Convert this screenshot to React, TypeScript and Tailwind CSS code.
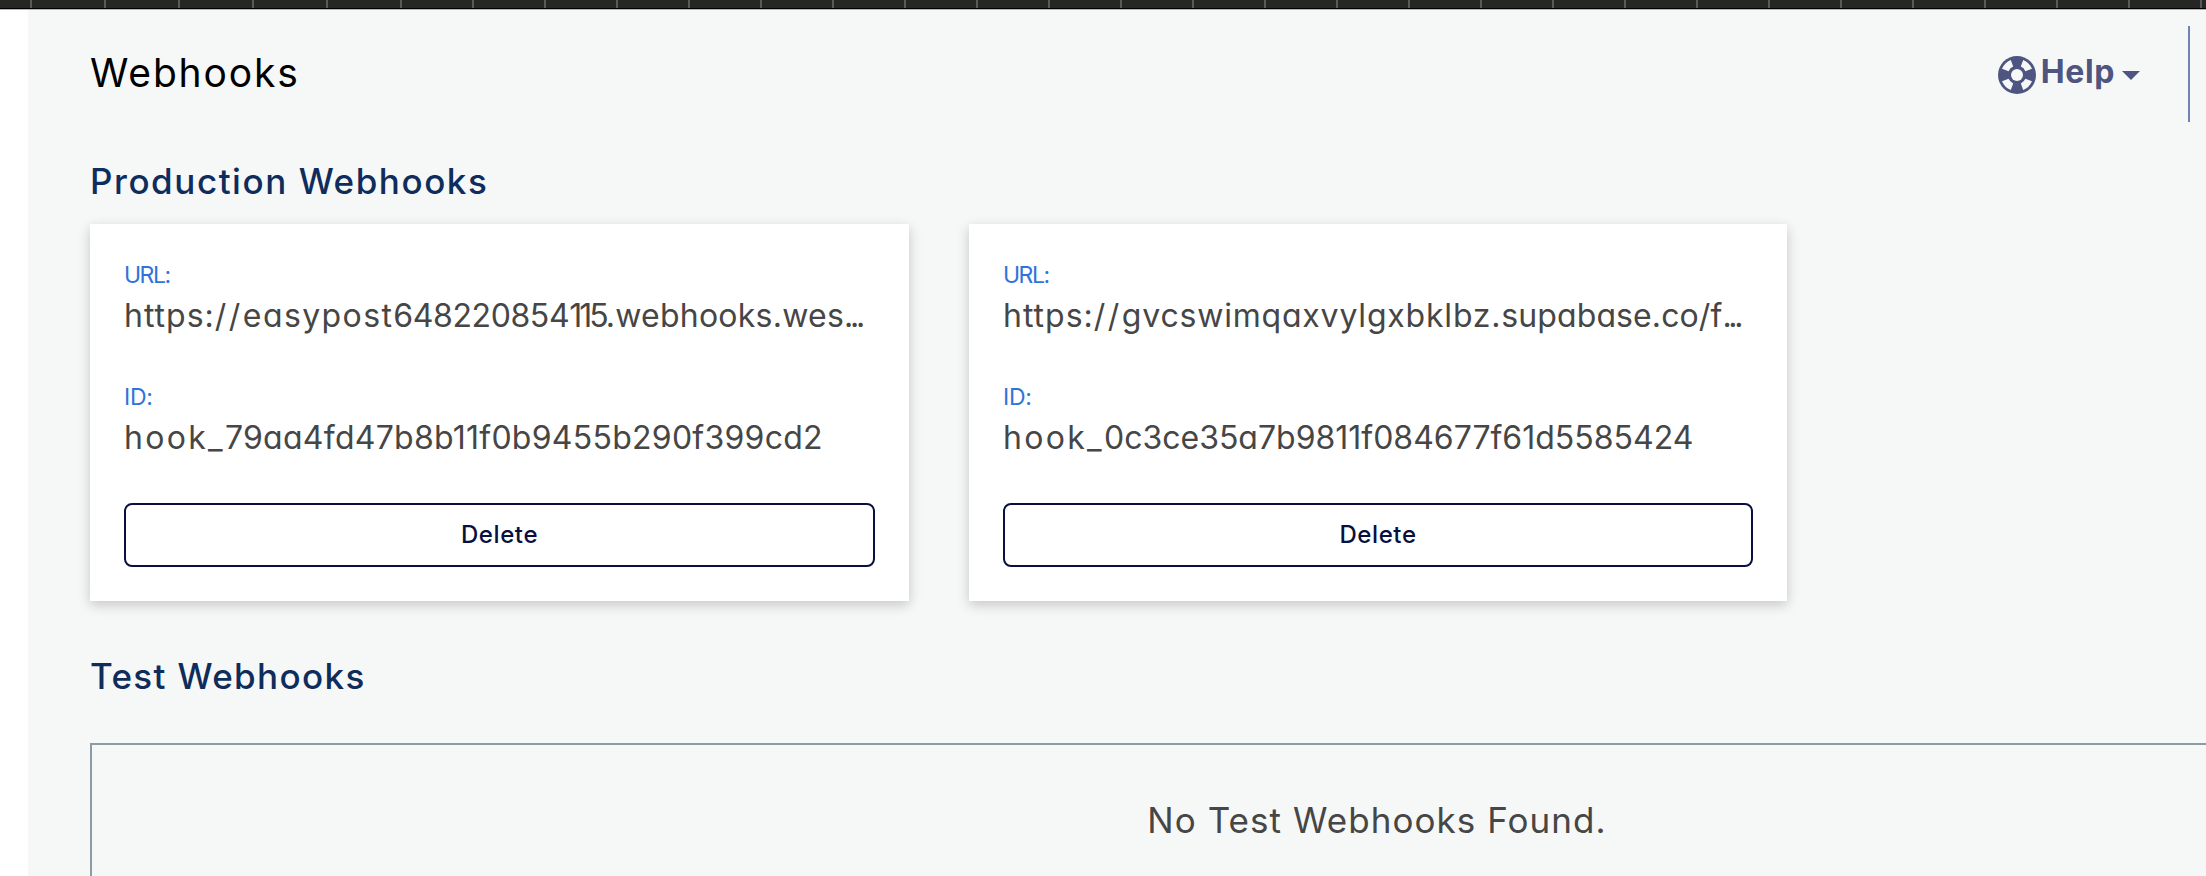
type Part = { text: string; tracking: string };
type Webhook = { url: Part[]; id: Part[] };

const webhooks: Webhook[] = [
  {
    url: [
      { text: "https:", tracking: "tracking-[1px]" },
      { text: "//", tracking: "tracking-[2.5px]" },
      { text: "easypost", tracking: "tracking-[1.4px]" },
      { text: "648220854", tracking: "tracking-[-0.4px]" },
      { text: "115", tracking: "tracking-[-3px]" },
      { text: ".webhooks.wes", tracking: "tracking-[0.25px]" },
      { text: "...", tracking: "tracking-[-3.3px]" },
    ],
    id: [
      { text: "hook_", tracking: "tracking-[2.3px]" },
      { text: "79aa4fd47b8b11f0b9455b290f399cd2", tracking: "tracking-[0.26px]" },
    ],
  },
  {
    url: [
      { text: "https:", tracking: "tracking-[1px]" },
      { text: "//", tracking: "tracking-[2.5px]" },
      { text: "gvcswimqaxvylgxbklbz.", tracking: "tracking-[0.8px]" },
      { text: "supabase.co/f", tracking: "tracking-[0.1px]" },
      { text: "...", tracking: "tracking-[-3.3px]" },
    ],
    id: [
      { text: "hook_", tracking: "tracking-[2.3px]" },
      { text: "0c3ce35a7b9811f084677f61d5585424", tracking: "tracking-[0px]" },
    ],
  },
];

function BrowserStrip() {
  return (
    <div className="flex h-[10px] shrink-0 overflow-hidden border-b border-[#b3b5b4] bg-[#262624] shadow-[inset_0_-1px_0_#000]">
      <div className="flex h-[8px]">
        <div className="w-[32px] shrink-0 border-r-2 border-[#5a5a58]" />
        {Array.from({ length: 5 }, (_, i) => (
          <div key={i} className="w-[74px] shrink-0 border-r-2 border-[#5a5a58]" />
        ))}
        {Array.from({ length: 26 }, (_, i) => (
          <div key={i} className="w-[72px] shrink-0 border-r-2 border-[#5a5a58]" />
        ))}
      </div>
    </div>
  );
}

function LifeRing() {
  const quarter = "M3.8 -8.4 L6.2 -15 A16.3 16.3 0 0 1 15 -6.2 L8.4 -3.8 A9.2 9.2 0 0 0 3.8 -8.4 Z";
  return (
    <svg className="size-[38px]" viewBox="-19 -19 38 38">
      <circle r="19" fill="#4d5580" />
      <circle r="6" fill="#f6f8f7" />
      {[0, 90, 180, 270].map((a) => (
        <path key={a} d={quarter} transform={`rotate(${a})`} fill="#f6f8f7" />
      ))}
    </svg>
  );
}

function Value({ parts }: { parts: Part[] }) {
  return (
    <div className="whitespace-nowrap text-[32px] leading-[46px] text-[#464646]">
      {parts.map((p) => (
        <span key={p.text} className={p.tracking}>{p.text}</span>
      ))}
    </div>
  );
}

function WebhookCard({ url, id }: Webhook) {
  return (
    <article className="h-[377px] bg-white px-[34px] pt-[33px] shadow-[0_4px_12px_rgba(0,0,0,0.2)]">
      <div className="text-[23px] leading-[36px] tracking-[-1.5px] text-[#2f74d8]">URL:</div>
      <Value parts={url} />
      <div className="mt-10 text-[23px] leading-[36px] tracking-[-0.3px] text-[#2f74d8]">ID:</div>
      <Value parts={id} />
      <button className="mt-[42px] flex h-16 w-full items-center justify-center rounded-[8px] border-2 border-[#08103f] text-[24px] font-medium tracking-[0.6px] text-[#08103f]">
        Delete
      </button>
    </article>
  );
}

export default function App() {
  return (
    <div className="flex h-[876px] w-[2206px] flex-col overflow-hidden bg-white font-['Inter',sans-serif] [font-feature-settings:'cv11','calt'_0]">
      <BrowserStrip />
      <main className="ml-7 flex-1 overflow-hidden bg-[#f6f8f7] pl-[62px] pt-4">
        <header className="flex h-24 items-center justify-between pr-4">
          <h1 className="pb-[2px] text-[39px] leading-[54px] tracking-[1.85px] text-black">Webhooks</h1>
          <div className="flex h-full items-center border-r-2 border-[#7084b4] pr-[48px] text-[#4d5580]">
            <div className="pt-[2px]"><LifeRing /></div>
            <span className="ml-[5px] pb-[5px] text-[32px] font-bold leading-[44px] tracking-[0.6px]">Help</span>
            <svg className="ml-[7px] mt-[3px] h-[9px] w-[18px]" viewBox="0 0 18 9" fill="currentColor">
              <path d="M0 0H18L9 9Z" />
            </svg>
          </div>
        </header>
        <h2 className="mt-8 text-[35px] font-medium leading-[54px] tracking-[1.55px] text-[#0f2d5c]">Production Webhooks</h2>
        <section className="mt-4 grid grid-cols-[819px_818px] gap-[60px]">
          {webhooks.map((w) => (
            <WebhookCard key={w.id[1].text} {...w} />
          ))}
        </section>
        <h2 className="mt-12 text-[35px] font-medium leading-[54px] tracking-[1.35px] text-[#0f2d5c]">Test Webhooks</h2>
        <section className="mt-10 h-[300px] w-[2574px] border-2 border-[#8b9ca5] pt-12 text-center text-[35px] leading-[54px] tracking-[1.05px] text-[#464646]">
          No Test Webhooks Found.
        </section>
      </main>
    </div>
  );
}
